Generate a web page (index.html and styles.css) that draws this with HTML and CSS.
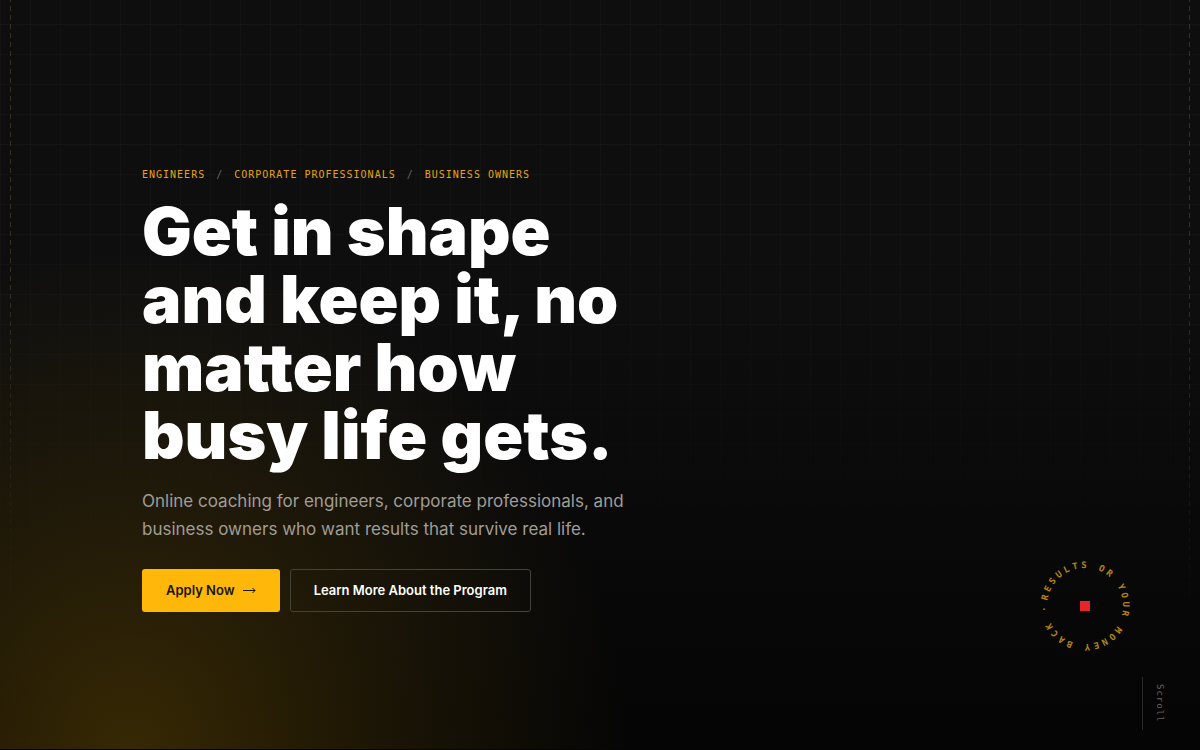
FILE: index.html
```html
<!DOCTYPE html>
<html lang="en">
  <head>
    <meta charset="UTF-8" />
    <meta name="viewport" content="width=device-width, initial-scale=1.0" />
    <title>Online Coaching</title>
    <link rel="stylesheet" href="styles.css">
  </head>
  <body>
    <section class="hero">
      <div class="grid"></div>
      <div class="rails"></div>
      <div class="content">
        <p class="eyebrow">
          <span>Engineers</span>
          <span class="slash">/</span>
          <span>Corporate Professionals</span>
          <span class="slash">/</span>
          <span>Business Owners</span>
        </p>
        <h1>Get in shape<br>and keep it, no<br>matter how<br>busy life gets.</h1>
        <p class="lead">Online coaching for engineers, corporate professionals, and<br>business owners who want results that survive real life.</p>
        <div class="actions">
          <a class="btn primary" href="#apply">Apply Now
            <svg width="13" height="9" viewBox="0 0 13 9" fill="none" stroke="currentColor" aria-hidden="true">
              <path d="M0 5.5h12M9.5 3l2.5 2.5L9.5 8" />
            </svg>
          </a>
          <a class="btn outline" href="#program">Learn More About the Program</a>
        </div>
      </div>
      <div class="badge">
        <svg width="104" height="104" viewBox="0 0 104 104">
          <path id="ring" d="M14 52a38 38 0 0 1 76 0a38 38 0 0 1 -76 0" fill="none" transform="rotate(8 52 52)" />
          <text><textPath href="#ring">RESULTS OR YOUR MONEY BACK ·</textPath></text>
          <rect x="47" y="47" width="10" height="10" fill="#e8232a" />
        </svg>
      </div>
      <a class="scroll" href="#program">Scroll</a>
    </section>
  </body>
</html>
```

FILE: styles.css
```css
* {
  box-sizing: border-box;
}
body {
  margin: 0;
  background: #050505;
  color: white;
  font-family: Inter, "Liberation Sans", sans-serif;
}
.hero {
  position: relative;
  display: flex;
  align-items: center;
  min-height: 100vh;
  padding: 32px 142px 0;
  overflow: hidden;
  border-bottom: 1px solid #050505;
  background:
    radial-gradient(ellipse 500px 500px at 130px 100%, rgba(255, 184, 0, 0.2), rgba(255, 184, 0, 0.09) 50%, transparent),
    linear-gradient(#0e0e0e 40%, #050505 95%);
}
.grid,
.rails {
  position: absolute;
  inset: 0;
  pointer-events: none;
}
.grid {
  background:
    linear-gradient(90deg, rgba(255, 255, 255, 0.025) 1px, transparent 1px),
    linear-gradient(rgba(255, 255, 255, 0.025) 1px, transparent 1px) 0 24px;
  background-size: 30px 30px;
  mask-image: linear-gradient(black 30%, transparent 85%);
}
/* dashed lines down both edges */
.rails {
  inset: 0 10px;
  background:
    linear-gradient(#3a3220 5px, transparent 5px) 0 6px / 1px 9px repeat-y,
    linear-gradient(#3a3220 5px, transparent 5px) 100% 6px / 1px 9px repeat-y;
  mask-image: linear-gradient(black 30%, transparent 85%);
}
.content {
  position: relative;
}
.eyebrow {
  display: flex;
  gap: 11px;
  margin: 0 0 16px;
  font: 10px/12px "DejaVu Sans Mono", monospace;
  letter-spacing: 1px;
  text-transform: uppercase;
  color: #e6a60a;
}
.slash {
  color: #666;
}
h1 {
  margin: 0;
  font-size: 66px;
  line-height: 68px;
  font-weight: 900;
}
.lead {
  margin: 18px 0 26px;
  font-size: 17px;
  line-height: 28px;
  color: #a09d97;
}
.actions {
  display: flex;
  flex-wrap: wrap;
  gap: 10px;
}
.btn {
  display: flex;
  align-items: center;
  gap: 8px;
  height: 43px;
  padding: 0 23px 2px;
  border: 1px solid transparent;
  border-radius: 3px;
  font-size: 13px;
  font-weight: 600;
  color: white;
  text-decoration: none;
}
.primary {
  background: #ffb80a;
  color: #1a1305;
}
.outline {
  border-color: #44423c;
}
.badge {
  position: absolute;
  right: 63px;
  bottom: 91px;
}
.badge svg {
  display: block;
}
.badge text {
  font: bold 9px "DejaVu Sans Mono", monospace;
  letter-spacing: 3px;
  fill: #b4860f;
}
.scroll {
  position: absolute;
  right: 36px;
  bottom: 19px;
  padding: 7px 0 7px 12px;
  border-left: 1px solid #2a2a2a;
  font: 9px/9px "DejaVu Sans Mono", monospace;
  letter-spacing: 1px;
  color: #666;
  writing-mode: vertical-rl;
  text-decoration: none;
}
```
